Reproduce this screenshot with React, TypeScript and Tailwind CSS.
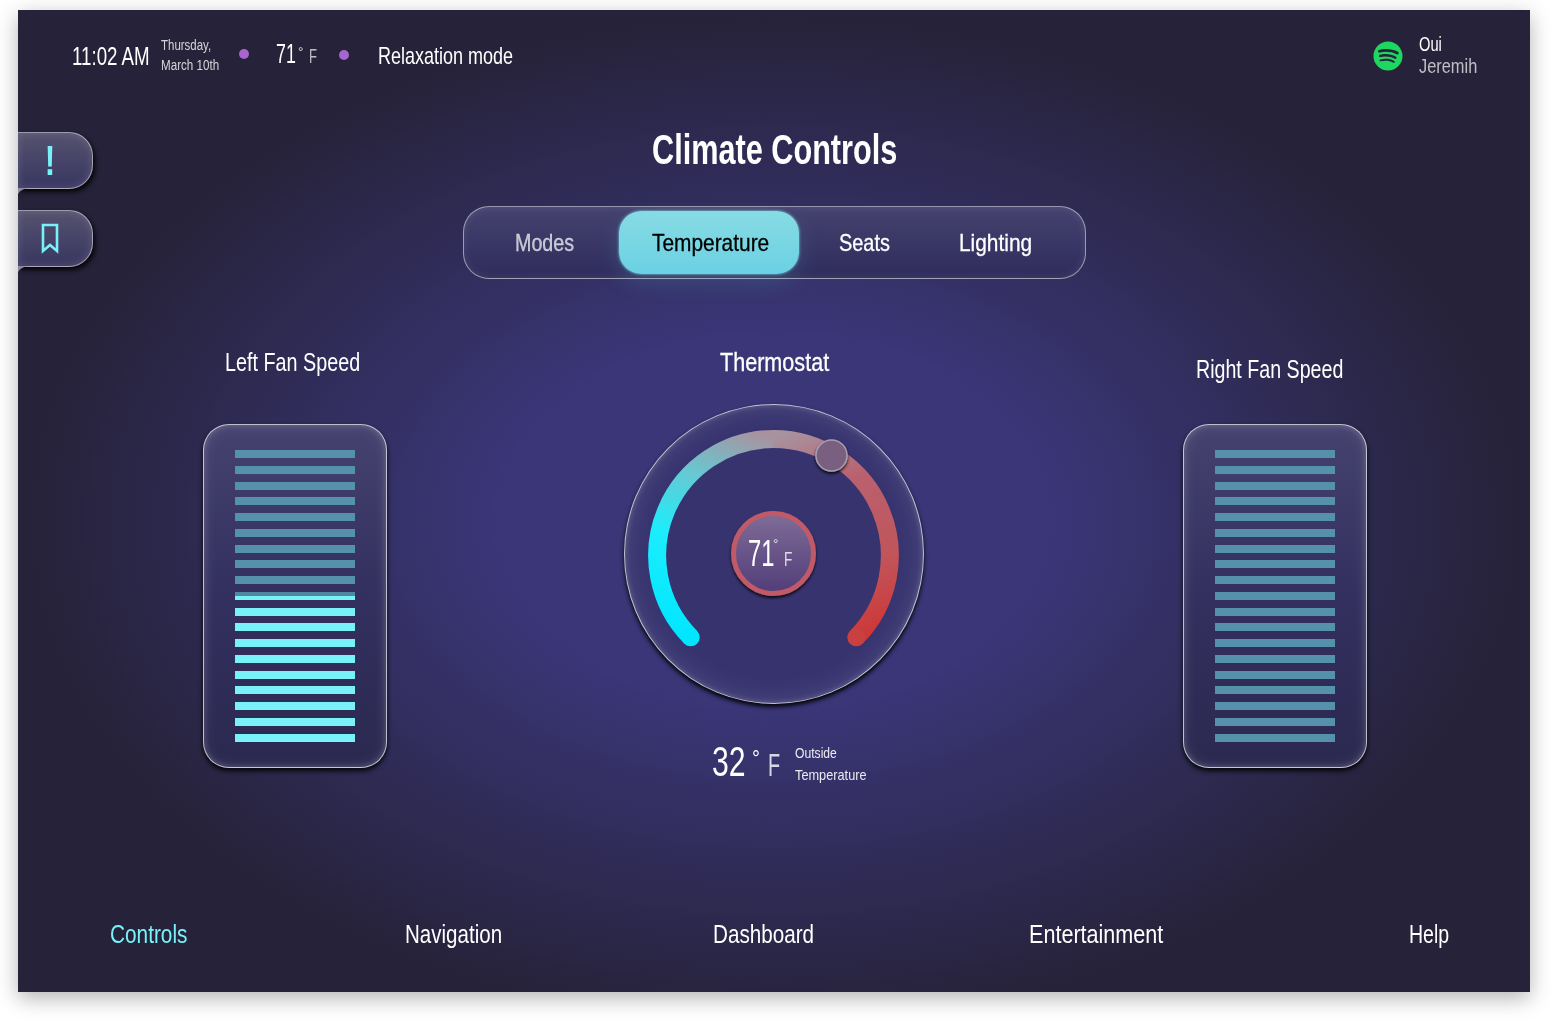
import React from 'react';
import { FaSpotify } from 'react-icons/fa';

const font = { fontFamily: '"Liberation Sans", Arial, sans-serif' };

// squeezes Liberation Sans down to the narrow face of the design
const N: React.FC<{ c: string; children: React.ReactNode }> = ({ c, children }) => (
  <span className={`inline-block whitespace-nowrap origin-left ${c}`}>{children}</span>
);

const FanPanel: React.FC<{ lit: number }> = ({ lit }) => {
  const bars = Array.from({ length: 19 }, (_, i) => i);
  return (
    <div className="w-[184px] h-[344px] rounded-[26px] border-[1.5px] border-white/70 bg-gradient-to-b from-[#45426f] via-[#33305f] to-[#2b2850] shadow-[0_3px_5px_rgba(0,0,0,0.9),inset_0_0_6px_rgba(255,255,255,0.2),inset_0_0_16px_rgba(255,255,255,0.1)] pt-[25px] pl-[30.5px]">
      <div className="w-[120px] h-[292px] flex flex-col justify-between">
        {bars.map((i) => {
          const fromBottom = 18 - i;
          if (lit > 0 && fromBottom === lit) {
            return (
              <div key={i} className="h-[8px] bg-[#78f2f8]">
                <div className="h-[4px] bg-[#4f88a0]" />
              </div>
            );
          }
          return <div key={i} className={`h-[8px] ${fromBottom < lit ? 'bg-[#78f2f8]' : 'bg-[#5591ab]'}`} />;
        })}
      </div>
    </div>
  );
};

const SideTab: React.FC<{ children: React.ReactNode }> = ({ children }) => (
  <div className="relative w-[75px] h-[57px] rounded-r-[24px] border-t-[1.5px] border-b-[1.5px] border-r-[1.5px] border-white/50 bg-gradient-to-b from-[#55526f] to-[#383660] shadow-[2px_3px_5px_rgba(0,0,0,0.9),inset_0_0_8px_rgba(255,255,255,0.14)] flex items-center justify-center pr-[10px]">
    {children}
    <svg className="absolute left-0 top-[55px]" width="12" height="6" viewBox="0 0 12 6">
      <path d="M0 0 H12 Q3 0.5 0 6 Z" fill="#8d8aa0" />
    </svg>
  </div>
);

const Dial: React.FC = () => (
  <div className="relative w-[300px] h-[300px] rounded-full border-[1.5px] border-white/70 bg-[#36336f] shadow-[0_3px_4px_rgba(0,0,0,0.95),inset_0_0_6px_rgba(255,255,255,0.2),inset_0_0_30px_rgba(255,255,255,0.12)]">
    <svg className="absolute left-[-1.5px] top-[-1.5px]" width="300" height="300" viewBox="0 0 300 300" fill="none">
      <defs>
        <linearGradient id="coldArc" gradientUnits="userSpaceOnUse" x1="66.7" y1="240" x2="150" y2="35">
          <stop offset="0" stopColor="#00e6ff" />
          <stop offset="0.42" stopColor="#1cedfc" />
          <stop offset="0.72" stopColor="#68c8d2" />
          <stop offset="1" stopColor="#a8929f" />
        </linearGradient>
        <linearGradient id="hotArc" gradientUnits="userSpaceOnUse" x1="150" y1="35" x2="240" y2="240">
          <stop offset="0" stopColor="#a8929f" />
          <stop offset="0.3" stopColor="#b9616f" />
          <stop offset="0.7" stopColor="#c15459" />
          <stop offset="1" stopColor="#cf3434" />
        </linearGradient>
        <linearGradient id="core" x1="0" y1="0" x2="0" y2="1">
          <stop offset="0" stopColor="#7f6c98" />
          <stop offset="1" stopColor="#513d78" />
        </linearGradient>
        <filter id="soft" x="-30%" y="-30%" width="160%" height="160%">
          <feDropShadow dx="0" dy="2" stdDeviation="1.5" floodColor="#000" floodOpacity="0.85" />
        </filter>
      </defs>
      <path d="M66.7 233.3 A116.5 116.5 0 0 1 150 35" stroke="url(#coldArc)" strokeWidth="18" />
      <path d="M149.5 35 A116.5 116.5 0 0 1 232.3 233.3" stroke="url(#hotArc)" strokeWidth="18" />
      <circle cx="66.7" cy="233.3" r="9" fill="#00e6ff" />
      <circle cx="232.3" cy="233.3" r="9" fill="#c94040" />
      <circle cx="207.5" cy="51.5" r="15.5" fill="#7a6080" stroke="#a99cb2" strokeWidth="1.5" filter="url(#soft)" />
      <circle cx="149.5" cy="149.5" r="40" fill="url(#core)" stroke="#c05a68" strokeWidth="5" filter="url(#soft)" />
    </svg>
    <div className="absolute left-[122.5px] top-[131px] flex items-baseline text-white leading-none">
      <N c="w-[25px] text-[36px] scale-x-[0.66]">71</N>
      <N c="w-[11px] text-[15px] text-white/80 self-start scale-x-[0.9]">°</N>
      <N c="text-[21px] text-white/80 scale-x-[0.65]">F</N>
    </div>
  </div>
);

export default function App() {
  return (
    <div className="min-h-[1022px] bg-white pt-[10px] pl-[18px]" style={font}>
      <div className="relative w-[1512px] h-[982px] overflow-hidden bg-[radial-gradient(ellipse_at_50%_52%,#3a3677_0%,#3a3677_26%,#262239_70%)] shadow-[0_6px_20px_rgba(0,0,0,0.3)] text-white">
        {/* Side tabs */}
        <div className="absolute left-0 top-[122px] flex flex-col gap-[21px]">
          <SideTab>
            <span className="text-[42px] font-bold leading-none text-[#78f2f8] scale-x-[0.75]">!</span>
          </SideTab>
          <SideTab>
            <svg width="18" height="31" viewBox="0 0 18 31" fill="none">
              <path d="M2 2 H16 V28 L9 22 L2 28 Z" stroke="#78f2f8" strokeWidth="2.6" />
            </svg>
          </SideTab>
        </div>

        {/* Status bar */}
        <div className="h-[92px] flex items-center pl-[54px] pr-[53px]">
          <N c="w-[89px] text-[26px] leading-none scale-x-[0.72]">11:02 AM</N>
          <div className="w-[78px] text-[14px] leading-[20px] text-white/80 mb-[2px]">
            <div><N c="scale-x-[0.82]">Thursday,</N></div>
            <div><N c="scale-x-[0.83]">March 10th</N></div>
          </div>
          <div className="w-[10px] h-[10px] rounded-full bg-[#a765cf] mb-[4px]" />
          <div className="w-[90px] pl-[27px] flex items-baseline">
            <N c="w-[22px] text-[27px] leading-none scale-x-[0.66]">71</N>
            <N c="w-[11px] text-[15px] text-white/80 self-start scale-x-[0.9]">°</N>
            <N c="text-[20px] text-white/70 scale-x-[0.65]">F</N>
          </div>
          <div className="w-[10px] h-[10px] rounded-full bg-[#a765cf] mb-[2px]" />
          <N c="ml-[29px] w-[150px] text-[24px] leading-none scale-x-[0.75]">Relaxation mode</N>
          <FaSpotify className="ml-auto text-[#1ed760]" size={30} />
          <div className="w-[58px] ml-[16px] text-[21px] leading-[22px] mb-[2px]">
            <div><N c="scale-x-[0.7]">Oui</N></div>
            <div className="text-white/70"><N c="scale-x-[0.78]">Jeremih</N></div>
          </div>
        </div>

        <h1 className="ml-[634px] text-[42px] font-bold leading-[48px] mt-[24px]">
          <N c="scale-x-[0.73]">Climate Controls</N>
        </h1>

        {/* Tabs */}
        <div className="mt-[32px] ml-[445px] w-[623px] h-[73px] rounded-[26px] border border-white/50 bg-gradient-to-b from-[#45426f] to-[#2f2c5c] shadow-[inset_0_0_8px_rgba(255,255,255,0.1)] flex items-center pl-[51px] text-[24px] [-webkit-text-stroke:0.3px_currentColor]">
          <N c="w-[60px] text-white/70 scale-x-[0.82]">Modes</N>
          <div className="ml-[44px] w-[180px] h-[63px] rounded-[22px] bg-gradient-to-b from-[#87dbe4] to-[#6ad1e3] shadow-[0_0_3px_#7ad6e3,0_8px_22px_rgba(90,200,220,0.18)] flex items-center pl-[33px] text-black">
            <N c="scale-x-[0.87]">Temperature</N>
          </div>
          <N c="ml-[40px] w-[51px] scale-x-[0.83]">Seats</N>
          <N c="ml-[69px] scale-x-[0.87]">Lighting</N>
        </div>

        {/* Controls */}
        <div className="mt-[68px] ml-[185px] flex items-start">
          <div className="w-[184px]">
            <div className="text-[26px] leading-[30px] h-[30px] mb-[47px] ml-[22px]">
              <N c="scale-x-[0.76]">Left Fan Speed</N>
            </div>
            <FanPanel lit={9} />
          </div>
          <div className="ml-[237px] w-[300px]">
            <div className="text-[26px] leading-[30px] h-[30px] mb-[27px] ml-[96px] [-webkit-text-stroke:0.3px_currentColor]">
              <N c="scale-x-[0.83]">Thermostat</N>
            </div>
            <Dial />
            <div className="mt-[37px] ml-[88px] flex items-start">
              <div className="flex items-baseline leading-none">
                <N c="w-[40px] text-[42px] scale-x-[0.72]">32</N>
                <N c="w-[16px] text-[22px] self-start mt-[7px] scale-x-[0.9]">°</N>
                <N c="w-[27px] text-[32px] text-white/80 scale-x-[0.62]">F</N>
              </div>
              <div className="text-[15px] leading-[22px] text-white/90 pt-[1px]">
                <div><N c="scale-x-[0.81]">Outside</N></div>
                <div><N c="scale-x-[0.85]">Temperature</N></div>
              </div>
            </div>
          </div>
          <div className="ml-[259px] w-[184px]">
            <div className="text-[26px] leading-[30px] h-[30px] mt-[7px] mb-[40px] ml-[13px]">
              <N c="scale-x-[0.755]">Right Fan Speed</N>
            </div>
            <FanPanel lit={0} />
          </div>
        </div>

        {/* Bottom nav */}
        <div className="absolute bottom-[43px] left-0 w-full grid grid-cols-[295px_308px_316px_380px_auto] pl-[92px] text-[26px] leading-[30px]">
          <N c="text-[#78f2f8] scale-x-[0.8]">Controls</N>
          <N c="scale-x-[0.79]">Navigation</N>
          <N c="scale-x-[0.795]">Dashboard</N>
          <N c="scale-x-[0.83]">Entertainment</N>
          <N c="scale-x-[0.75]">Help</N>
        </div>
      </div>
    </div>
  );
}
